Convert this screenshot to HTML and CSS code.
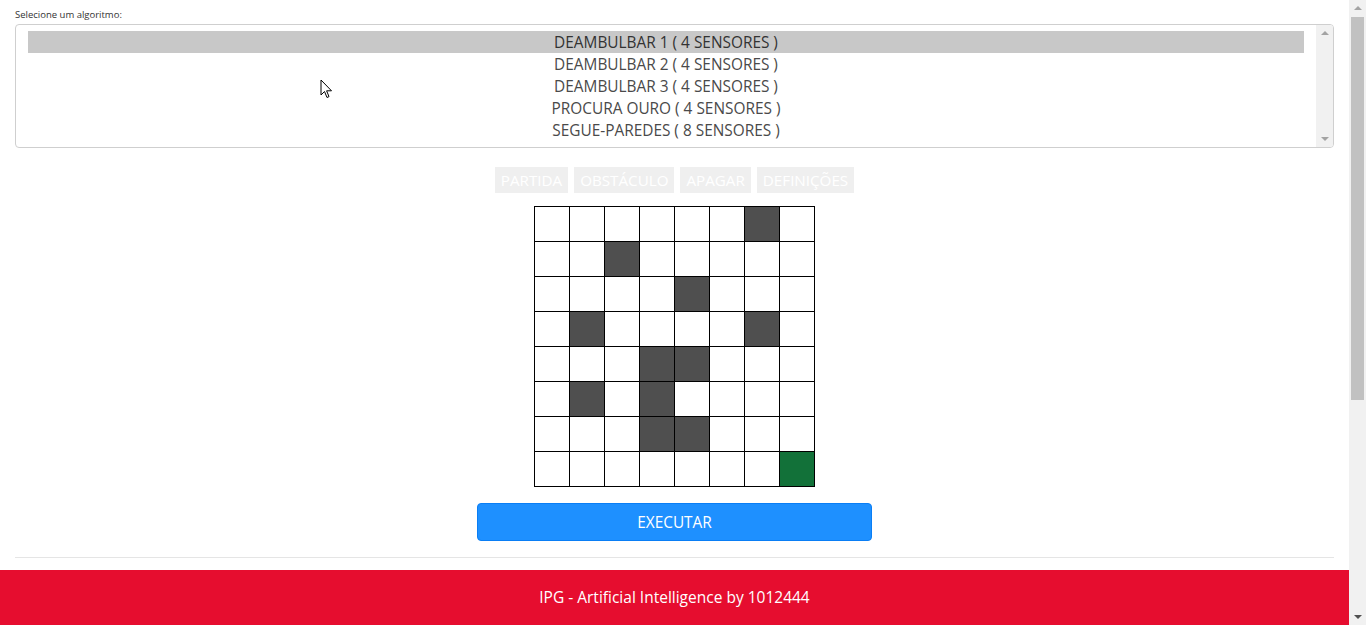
FILE: index.html
```html
<!DOCTYPE html>
<html lang="pt">
<head>
<meta charset="utf-8">
<title>IPG - Artificial Intelligence</title>
<link rel="stylesheet" href="styles.css">
</head>
<body>
<div class="page">
  <main class="main">
    <div class="container">
      <label class="label">Selecione um algoritmo:</label>
      <div class="listbox">
        <ul class="options">
          <li class="option selected">DEAMBULBAR 1 ( 4 SENSORES )</li>
          <li class="option">DEAMBULBAR 2 ( 4 SENSORES )</li>
          <li class="option">DEAMBULBAR 3 ( 4 SENSORES )</li>
          <li class="option">PROCURA OURO ( 4 SENSORES )</li>
          <li class="option">SEGUE-PAREDES ( 8 SENSORES )</li>
        </ul>
        <div class="lb-scroll">
          <span class="arrow up light"></span>
          <span class="arrow down light"></span>
        </div>
      </div>

      <div class="tools">
        <button class="tool">PARTIDA</button>
        <button class="tool">OBSTÁCULO</button>
        <button class="tool">APAGAR</button>
        <button class="tool">DEFINIÇÕES</button>
      </div>

      <div class="board">
        <div class="cell"></div><div class="cell"></div><div class="cell"></div><div class="cell"></div><div class="cell"></div><div class="cell"></div><div class="cell wall"></div><div class="cell"></div>
        <div class="cell"></div><div class="cell"></div><div class="cell wall"></div><div class="cell"></div><div class="cell"></div><div class="cell"></div><div class="cell"></div><div class="cell"></div>
        <div class="cell"></div><div class="cell"></div><div class="cell"></div><div class="cell"></div><div class="cell wall"></div><div class="cell"></div><div class="cell"></div><div class="cell"></div>
        <div class="cell"></div><div class="cell wall"></div><div class="cell"></div><div class="cell"></div><div class="cell"></div><div class="cell"></div><div class="cell wall"></div><div class="cell"></div>
        <div class="cell"></div><div class="cell"></div><div class="cell"></div><div class="cell wall"></div><div class="cell wall"></div><div class="cell"></div><div class="cell"></div><div class="cell"></div>
        <div class="cell"></div><div class="cell wall"></div><div class="cell"></div><div class="cell wall"></div><div class="cell"></div><div class="cell"></div><div class="cell"></div><div class="cell"></div>
        <div class="cell"></div><div class="cell"></div><div class="cell"></div><div class="cell wall"></div><div class="cell wall"></div><div class="cell"></div><div class="cell"></div><div class="cell"></div>
        <div class="cell"></div><div class="cell"></div><div class="cell"></div><div class="cell"></div><div class="cell"></div><div class="cell"></div><div class="cell"></div><div class="cell goal"></div>
      </div>

      <div class="run-row">
        <button class="run">EXECUTAR</button>
      </div>
      <hr class="divider">
    </div>
    <footer class="footer">IPG - Artificial Intelligence by 1012444</footer>
  </main>
  <aside class="page-scroll">
    <span class="arrow up light"></span>
    <div class="thumb-area"><div class="thumb"></div></div>
    <span class="arrow down dark"></span>
  </aside>
</div>
<svg class="cursor" width="14" height="22" viewBox="0 0 14 22" aria-hidden="true">
  <path d="M1 1 L1 16 L4.5 12.5 L7 18.5 L9 17.6 L6.6 11.8 L11.5 11.8 Z" fill="#fff" stroke="#000" stroke-width="1" stroke-linejoin="miter"/>
</svg>
</body>
</html>
```

FILE: styles.css
```css
* { box-sizing: border-box; }
html, body {
  margin: 0;
  padding: 0;
  height: 625px;
  overflow: hidden;
}
body {
  font-family: "Open Sans", "Noto Sans", "Liberation Sans", sans-serif;
  color: #444;
  background: #fff;
  position: relative;
}
.page {
  display: flex;
  height: 625px;
}
.main {
  flex: 1;
  min-width: 0;
  overflow: hidden;
}
.container {
  padding: 0 15px;
}
.label {
  display: block;
  font-size: 9.5px;
  line-height: 14px;
  color: #333;
  padding-top: 8px;
  margin-bottom: 2px;
}
.listbox {
  display: flex;
  height: 124px;
  border: 1px solid #cfcfcf;
  border-radius: 4px;
  overflow: hidden;
}
.options {
  flex: 1;
  list-style: none;
  margin: 0;
  padding: 6px 12px;
}
.option {
  height: 22px;
  line-height: 24px;
  text-align: center;
  font-size: 15.4px;
  color: #4a4a4a;
}
.option.selected {
  background: #c8c8c8;
  color: #333;
}
.lb-scroll {
  width: 17px;
  background: #f1f1f1;
  display: flex;
  flex-direction: column;
  justify-content: space-between;
  align-items: center;
  padding: 6px 0;
}
.arrow {
  width: 0;
  height: 0;
  border-left: 4px solid transparent;
  border-right: 4px solid transparent;
}
.arrow.up.light { border-bottom: 4px solid #a3a3a3; }
.arrow.down.light { border-top: 4px solid #a3a3a3; }
.arrow.down.dark { border-top: 4px solid #505050; }

.tools {
  display: flex;
  justify-content: center;
  gap: 6px;
  margin-top: 19px;
}
.tool {
  height: 26px;
  padding: 0 6px;
  border: 0;
  background: #efefef;
  color: #fff;
  font-family: inherit;
  font-size: 15.2px;
  line-height: 26px;
}
.board {
  display: grid;
  grid-template-columns: repeat(8, 34px);
  grid-auto-rows: 34px;
  gap: 1px;
  padding: 1px;
  background: #000;
  width: 281px;
  margin: 13px auto 0;
}
.cell { background: #fff; }
.cell.wall { background: #4f4f4f; }
.cell.goal { background: #127139; }

.run-row {
  display: flex;
  justify-content: center;
  margin-top: 16px;
}
.run {
  width: 395px;
  height: 38px;
  background: #1e90ff;
  border: 1px solid #0a7ef5;
  border-radius: 4px;
  color: #fff;
  font-family: inherit;
  font-size: 15.4px;
}
.divider {
  border: 0;
  border-top: 1px solid #e5e5e5;
  margin: 16px 0 12px;
}
.footer {
  background: #e60d2f;
  color: #fff;
  text-align: center;
  font-size: 15.5px;
  line-height: 20px;
  padding: 17px 0 300px;
}
.page-scroll {
  width: 17px;
  background: #f1f1f1;
  display: flex;
  flex-direction: column;
  align-items: center;
  padding: 6px 0;
}
.thumb-area {
  flex: 1;
  width: 100%;
  padding: 7px 2px 0;
}
.thumb {
  height: 383px;
  background: #c1c1c1;
}
.cursor {
  position: absolute;
  left: 320px;
  top: 79px;
}
```
